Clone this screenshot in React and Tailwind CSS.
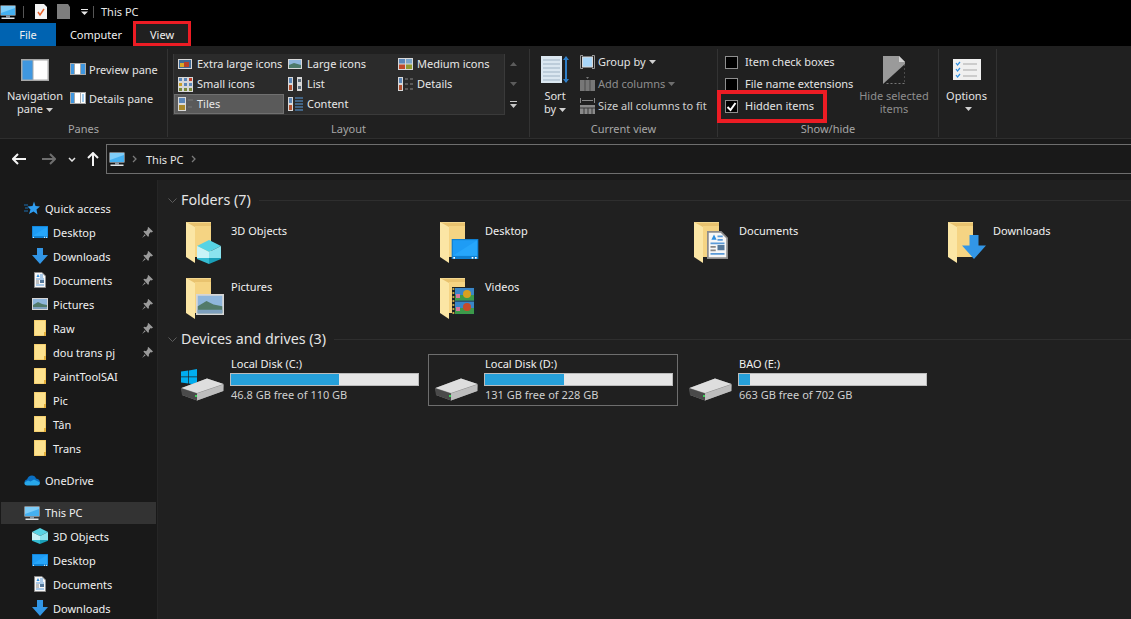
import React from 'react';

// little drawn icons, all pixel sized like the Win10 shell ones
const Monitor = ({ className = 'w-4 h-4' }) => (
  <svg viewBox="0 0 16 16" className={className}>
    <rect x="0.5" y="1.5" width="15" height="10" fill="#d5dfe8" />
    <rect x="1" y="2" width="14" height="9" fill="#45b0f0" />
    <path d="M1 2h14v2L1 9z" fill="#7fcdf8" />
    <rect x="6" y="11.5" width="4" height="2" fill="#8a9aa8" />
    <rect x="1.5" y="13.5" width="13" height="1.5" fill="#e0e6ea" />
  </svg>
);
const BlueDesktop = ({ className = 'w-4 h-4' }) => (
  <svg viewBox="0 0 16 12" className={className}>
    <rect width="16" height="12" fill="#0f7fd0" />
    <rect x="0.7" y="0.7" width="14.6" height="9.4" fill="#1e9cf5" />
    <path d="M0.7 10.1 15.3 0.7V10.1z" fill="#26a6fb" />
    <rect x="12" y="10.8" width="1" height="1" fill="#fff" />
    <rect x="14" y="10.8" width="1" height="1" fill="#fff" />
    <rect x="1" y="10.8" width="1" height="1" fill="#fff" />
  </svg>
);
const DownArrow = ({ className = 'w-4 h-4' }) => (
  <svg viewBox="0 0 16 16" className={className}>
    <path d="M5 0h6v7h5l-8 9-8-9h5z" fill="#3296e6" />
  </svg>
);
const DocIcon = ({ className = 'w-4 h-4' }) => (
  <svg viewBox="0 0 12 16" className={className}>
    <path d="M0.5 0.5H8L11.5 4v11.5H0.5z" fill="#f7f7f7" stroke="#8c8c8c" />
    <path d="M2.5 5 4 2l1.5 3z" fill="#2f8fe0" />
    <path d="M6 3h3M6 5h3M2 7h8M2 13h8" stroke="#5a9ad8" />
    <rect x="6" y="8" width="4" height="3" fill="#55789a" />
    <path d="M2 9h3M2 11h3" stroke="#888" />
  </svg>
);
const PicIcon = ({ className = 'w-4 h-4' }) => (
  <svg viewBox="0 0 16 12" className={className}>
    <rect width="16" height="12" fill="#d6d6d6" />
    <rect x="1" y="1" width="14" height="10" fill="#8fb6dc" />
    <path d="M1 7 6 4l4 2 5 1v4H1z" fill="#527a6a" />
    <rect x="1" y="9" width="14" height="2" fill="#7d9fbd" />
  </svg>
);
const SmallFolder = () => (
  <svg viewBox="0 0 12 16" className="w-3 h-4">
    <rect width="12" height="16" fill="#f0c55e" />
    <rect x="0.6" y="0.6" width="10.6" height="14.8" fill="#fde28e" />
    <path d="M10 16v-4h2v4z" fill="#e3ae3a" />
  </svg>
);
const Cube = ({ className = 'w-4 h-4' }) => (
  <svg viewBox="0 0 24 24" className={className}>
    <path d="M12 0 24 6 12 12 0 6z" fill="#57d3e4" />
    <path d="M0 6 12 12V18L0 18z" fill="#c9f3f7" />
    <path d="M24 6 12 12V18H24z" fill="#8be3ee" />
    <path d="M0 18H12V24L0 19z" fill="#35bcd2" />
    <path d="M24 18H12V24L24 19z" fill="#1a9fb8" />
  </svg>
);
const Pin = () => (
  <svg viewBox="0 0 12 12" className="w-[11px] h-[11px]">
    <path d="M7 0 12 5 10.5 6 9.5 5.5 7.5 8 7.5 10 6.5 10.5 1.5 5 2.5 4 4.5 4.5 6.5 2 6 1z M3 8 0 12 4 9z" fill="#9a9a9a" />
  </svg>
);
const Star = () => (
  <svg viewBox="0 0 16 16" className="w-4 h-4">
    <path d="M10 1.5 11.5 6 16 6.5 12.5 9.5 13.5 14.5 9.5 11.5 5 14 6.5 9.5 3.5 6.5 8.5 6z" fill="#2f9df0" />
    <path d="M0 5h4M1 8h3M0 11h4" stroke="#1d6fb0" />
  </svg>
);
const Cloud = () => (
  <svg viewBox="0 0 16 11" className="w-4 h-[11px]">
    <path d="M3 4.5C4 2 5.500 0.500 8 0.500c2 0 3.500 1.200 4 3C14.500 3.800 16 5.500 16 7.500H0.500C0.500 6 1.500 4.700 3 4.500z" fill="#0a6fc2" />
    <path d="M0.500 7.500C0 9.500 1.500 10.500 3 10.500h10.500c1.500 0 2.500-1.300 2.500-3L10 4.500 6.500 6.500 4 5.500z" fill="#28a8ea" />
  </svg>
);
const Caret = ({ color = '#d0d0d0' }) => (
  <svg viewBox="0 0 7 4" className="inline-block w-[7px] h-1 ml-[3px] align-middle">
    <path d="M0 0h7L3.500 4z" fill={color} />
  </svg>
);

// 3 x 3 pane-layout thumbnails for the ribbon
const PaneIcon = ({ side }) => (
  <svg viewBox="0 0 16 12" className="w-4 h-3">
    <rect width="16" height="12" fill="#a8a8a8" />
    <rect x="1" y="1" width="3" height="10" fill="#3f97e0" />
    <rect x="5" y="1" width="5" height="10" fill="#fff" />
    <rect x="11" y="1" width="4" height="10" fill={side} />
    {side === '#fff' && <path d="M12 3h2M12 5h2M12 7h2M12 9h2" stroke="#3f97e0" />}
  </svg>
);
const GalleryIcon = ({ kind }) => {
  if (kind === 'xl') {
    return (
      <svg viewBox="0 0 14 10" className="w-[14px] h-[10px]">
        <rect width="14" height="10" fill="#d8d8d8" />
        <rect x="1" y="1" width="12" height="8" fill="#3f6a96" />
        <rect x="2" y="4" width="4" height="4" fill="#d8a82a" />
        <rect x="6" y="3" width="5" height="5" fill="#b8402a" />
      </svg>
    );
  }
  if (kind === 'lg') {
    return (
      <svg viewBox="0 0 14 10" className="w-[14px] h-[10px]">
        <rect width="14" height="10" fill="#d8d8d8" />
        <rect x="1" y="1" width="12" height="8" fill="#8fb6dc" />
        <path d="M1 6 6 4l7 2v3H1z" fill="#4d7a6a" />
      </svg>
    );
  }
  if (kind === 'md') {
    return (
      <svg viewBox="0 0 15 12" className="w-[15px] h-3">
        <rect width="15" height="12" fill="#d8d8d8" />
        <rect x="1" y="1" width="6" height="4.500" fill="#5b86b8" />
        <rect x="8" y="1" width="6" height="4.500" fill="#7aa4c8" />
        <rect x="1" y="6.500" width="6" height="4.500" fill="#c04a2a" />
        <rect x="8" y="6.500" width="6" height="4.500" fill="#8f9a30" />
      </svg>
    );
  }
  if (kind === 'sm') {
    return (
      <svg viewBox="0 0 15 15" className="w-[15px] h-[15px]">
        <rect width="15" height="15" fill="#d8d8d8" />
        {[1, 6, 11].map((y) =>
          [1, 6, 11].map((x) => (
            <rect key={`${x}-${y}`} x={x} y={y} width="3" height="3" fill={x === 11 && y === 1 ? '#c0402a' : x === 1 && y === 6 ? '#c9a02a' : y === 11 ? '#7a8a3a' : '#5b86b8'} />
          ))
        )}
      </svg>
    );
  }
  if (kind === 'tile' || kind === 'content' || kind === 'list' || kind === 'det') {
    return (
      <svg viewBox="0 0 15 14" className="w-[15px] h-[14px]">
        <rect x="0" y="0" width={kind === 'tile' ? 8 : 5} height="14" fill="#d8d8d8" />
        <rect x="1" y="1" width={kind === 'tile' ? 6 : 3} height="5" fill="#5b86b8" />
        <rect x="1" y="8" width={kind === 'tile' ? 6 : 3} height="5" fill={kind === 'tile' ? '#a9882a' : '#b05030'} />
        {kind === 'list' && <rect x="9" y="0" width="5" height="14" fill="#d8d8d8" />}
        {kind === 'list' && <rect x="10" y="2" width="3" height="3" fill="#5b6a78" />}
        {kind === 'list' && <rect x="10" y="9" width="3" height="3" fill="#5b6a78" />}
        {kind === 'content' && <path d="M7 1h8M7 4h8M7 7h8M7 10h8M7 13h8" stroke="#5b9ee0" />}
        {kind === 'det' && <path d="M7 2h3M12 2h3M7 7h3M12 7h3M7 12h3M12 12h3" stroke="#8a8a8a" />}
        {kind === 'tile' && <path d="M10 3h5M10 10h4" stroke="#777" />}
      </svg>
    );
  }
  return null;
};

// shell folder with an overlay drawn on its front
const Folder = ({ children }) => (
  <div className="relative w-[45px] h-[44px] shrink-0">
    <svg viewBox="0 0 26 41" className="absolute left-0 top-0 w-[26px] h-[41px]">
      <rect x="0" y="0" width="25" height="35" fill="#e9c36f" />
      <path d="M9 4H25V35H9z" fill="#f5d483" />
      <path d="M0 0 9 5V41L0 35z" fill="#fbe6a5" />
      <path d="M0 0H25V1H3z" fill="#f3d78f" />
    </svg>
    {children}
  </div>
);

const FilmStrip = () => (
  <svg viewBox="0 0 25 28" className="absolute left-[12px] top-[9px] w-[25px] h-[28px]">
    <rect width="25" height="28" fill="#1c2226" />
    <rect x="3" y="1" width="19" height="12.500" fill="#3a86c8" />
    <rect x="3" y="14.500" width="19" height="12.500" fill="#3a86c8" />
    <rect x="3" y="8" width="19" height="5.500" fill="#3c9a4a" />
    <rect x="3" y="21" width="19" height="6" fill="#3c9a4a" />
    <circle cx="15" cy="7" r="4" fill="#d8a020" />
    <circle cx="15" cy="20" r="4" fill="#c84a2a" />
    <rect x="4" y="7" width="4" height="4" fill="#d878a0" />
    <rect x="4" y="20" width="4" height="4" fill="#d878a0" />
    {[2, 6, 10, 14, 18, 22, 26].map((y) => (
      <rect key={y} x="0.500" y={y - 1} width="1.800" height="2" fill="#c8a848" />
    ))}
  </svg>
);

const HardDisk = ({ win }) => (
  <div className="relative w-[44px] h-[32px] shrink-0">
    {win && (
      <svg viewBox="0 0 16 16" className="absolute left-0 top-0 w-4 h-4">
        <path d="M0 2.500 7.300 1.500V7.500H0zM8 1.400 16 0V7.500H8zM0 8.300H7.300V14.500L0 13.500zM8 8.300H16V16L8 14.600z" fill="#00adef" />
      </svg>
    )}
    <svg viewBox="0 0 44 23" className="absolute left-0 bottom-0 w-[44px] h-[23px]">
      <path d="M0.500 10 26 0.500 42.500 6 42 13 16 22.500 1 17z" fill="#8c8c8c" />
      <path d="M0.500 10 26 0.500 42.500 6 16 15z" fill="#dedede" />
      <path d="M1 10.500 16 15.500V22.500L1 17z" fill="#4a4a4a" />
      <path d="M16 15.500 42.500 6.500V13L16 22.500z" fill="#bdbdbd" />
      <rect x="14" y="17" width="2" height="2" fill="#3cd05a" />
    </svg>
  </div>
);

const quickAccess = [
  { name: 'Desktop', icon: <BlueDesktop className="w-4 h-3" />, pin: true },
  { name: 'Downloads', icon: <DownArrow />, pin: true },
  { name: 'Documents', icon: <DocIcon className="w-3 h-4" />, pin: true },
  { name: 'Pictures', icon: <PicIcon className="w-4 h-3" />, pin: true },
  { name: 'Raw', icon: <SmallFolder />, pin: true },
  { name: 'dou trans pj', icon: <SmallFolder />, pin: true },
  { name: 'PaintToolSAI', icon: <SmallFolder /> },
  { name: 'Pic', icon: <SmallFolder /> },
  { name: 'Tân', icon: <SmallFolder /> },
  { name: 'Trans', icon: <SmallFolder /> },
];
const thisPc = [
  { name: '3D Objects', icon: <Cube /> },
  { name: 'Desktop', icon: <BlueDesktop className="w-4 h-3" /> },
  { name: 'Documents', icon: <DocIcon className="w-3 h-4" /> },
  { name: 'Downloads', icon: <DownArrow /> },
];

const folders = [
  { name: '3D Objects', overlay: <Cube className="absolute left-[11px] top-[18px] w-6 h-6" /> },
  { name: 'Desktop', overlay: <BlueDesktop className="absolute left-[11px] top-[17px] w-7 h-5" /> },
  { name: 'Documents', overlay: <DocIcon className="absolute left-[13px] top-[9px] w-[21px] h-7" /> },
  { name: 'Downloads', overlay: <DownArrow className="absolute left-[14px] top-[13px] w-6 h-6" /> },
  { name: 'Pictures', overlay: <PicIcon className="absolute left-[10px] top-[16px] w-7 h-[21px]" /> },
  { name: 'Videos', overlay: <FilmStrip /> },
];

const drives = [
  { name: 'Local Disk (C:)', free: '46.8 GB free of 110 GB', used: 58, win: true },
  { name: 'Local Disk (D:)', free: '131 GB free of 228 GB', used: 42, selected: true },
  { name: 'BAO (E:)', free: '663 GB free of 702 GB', used: 6 },
];

const gallery = [
  { kind: 'xl', label: 'Extra large icons' },
  { kind: 'lg', label: 'Large icons' },
  { kind: 'md', label: 'Medium icons' },
  { kind: 'sm', label: 'Small icons' },
  { kind: 'list', label: 'List' },
  { kind: 'det', label: 'Details' },
  { kind: 'tile', label: 'Tiles', active: true },
  { kind: 'content', label: 'Content' },
];

const RibbonGroup = ({ width, label, children }) => (
  <div className={`${width} mt-[3px] h-[88px] shrink-0 flex flex-col border-r border-[#333333]`}>
    <div className="h-[72px] flex relative">{children}</div>
    <div className="h-4 text-center leading-4 text-[#a6a6a6]">{label}</div>
  </div>
);

const NavRow = ({ item }) => (
  <div className="h-6 flex items-center pl-8">
    <span className="w-4 flex justify-center shrink-0">{item.icon}</span>
    <span className="ml-[5px] text-[#f0f0f0]">{item.name}</span>
    {item.pin && <span className="ml-auto mr-[4px]"><Pin /></span>}
  </div>
);

const SectionHeader = ({ title }) => (
  <div className="h-5 flex items-center pl-[10px]">
    <svg viewBox="0 0 9 5" className="w-[9px] h-[5px] shrink-0">
      <path d="M0.500 0.500 4.500 4.500 8.500 0.500" fill="none" stroke="#5c5c5c" />
    </svg>
    <span className="ml-[4px] text-[14.300px] leading-5 text-[#e4e4e4]">{title}</span>
    <div className="flex-1 h-px ml-2 bg-[#2e2e2e]" />
  </div>
);

const CheckRow = ({ label, checked }) => (
  <div className="h-[22px] flex items-center">
    <span className="w-[13px] h-[13px] border border-[#8f8f8f] bg-black flex items-center justify-center">
      {checked && (
        <svg viewBox="0 0 11 11" className="w-[11px] h-[11px]">
          <path d="M1.500 6 4.500 9 9.500 2" fill="none" stroke="#fff" strokeWidth="2" />
        </svg>
      )}
    </span>
    <span className="ml-[7px] mb-[2px] whitespace-nowrap text-[#e4e4e4]">{label}</span>
  </div>
);

export default function App() {
  return (
    <div className="relative w-[1131px] h-[619px] overflow-hidden bg-[#202020] text-white text-[11px] leading-[13px] font-['Noto_Sans','Open_Sans',sans-serif]">
      {/* Title bar */}
      <div className="h-[23px] bg-black flex items-center">
        <Monitor className="w-4 h-4" />
        <div className="ml-[7px] w-px h-3 bg-[#555]" />
        <svg viewBox="0 0 12 15" className="ml-[11px] w-3 h-[15px]">
          <path d="M0 0H9L12 3V15H0z" fill="#f2f2f2" />
          <path d="M3 8 5 11 9 5" fill="none" stroke="#e8632c" strokeWidth="1.500" />
        </svg>
        <svg viewBox="0 0 13 15" className="ml-[10px] w-[13px] h-[15px]">
          <path d="M0 0H11L13 3V15H0z" fill="#7d7d7d" />
        </svg>
        <svg viewBox="0 0 7 6" className="ml-[11px] w-[7px] h-[6px]">
          <path d="M0 0H7V1H0zM0 2.500H7L3.500 6z" fill="#e8e8e8" />
        </svg>
        <div className="ml-[5px] w-px h-3 bg-[#555]" />
        <span className="ml-[7px] text-[#e8e8e8]">This PC</span>
      </div>

      {/* Tabs */}
      <div className="h-[23px] bg-black flex items-stretch text-[#f0f0f0]">
        <div className="w-[56px] bg-[#0063b1] flex items-center justify-center">File</div>
        <div className="w-[80px] flex items-center justify-center">Computer</div>
        <div className="w-[52px] bg-[#202020] flex items-center justify-center">View</div>
      </div>

      {/* Ribbon */}
      <div className="h-[93px] bg-[#202020] border-b border-[#2e2e2e] flex items-start">
        <RibbonGroup width="w-[168px]" label="Panes">
          <div className="w-[70px] pt-[10px] flex flex-col items-center text-center text-[#e4e4e4]">
            <svg viewBox="0 0 28 22" className="w-7 h-[22px]">
              <rect width="28" height="22" fill="#a8a8a8" />
              <rect x="1.500" y="1.500" width="10" height="19" fill="#3f97e0" />
              <rect x="12.500" y="1.500" width="14" height="19" fill="#fff" />
            </svg>
            <div className="mt-2">Navigation</div>
            <div>pane<Caret /></div>
          </div>
          <div className="pt-[10px] flex flex-col gap-[9px] text-[#e4e4e4]">
            <div className="h-5 flex items-center gap-[3px]"><PaneIcon side="#3f97e0" />Preview pane</div>
            <div className="h-5 flex items-center gap-[3px]"><PaneIcon side="#fff" />Details pane</div>
          </div>
        </RibbonGroup>

        <RibbonGroup width="w-[362px]" label="Layout">
          <div className="ml-[5px] mt-[5px] w-[332px] h-[61px] border border-t-0 border-[#3a3a3a] bg-[#2b2b2b] grid grid-cols-[110px_110px_110px] auto-rows-[20px] text-[#e8e8e8]">
            {gallery.map((g) => (
              <div key={g.label} className={`flex items-center ${g.active ? 'bg-[#5a5a5a] border border-[#707070] pl-[2px]' : 'pl-[3px]'}`}>
                <span className="w-4 flex justify-center shrink-0"><GalleryIcon kind={g.kind} /></span>
                <span className="ml-[4px] mb-[2px] whitespace-nowrap">{g.label}</span>
              </div>
            ))}
          </div>
          <div className="ml-px mt-[5px] w-[14px] h-[61px] flex flex-col items-center">
            <div className="h-5 flex items-center">
              <svg viewBox="0 0 7 4" className="w-[7px] h-1"><path d="M0 4h7L3.500 0z" fill="#5c5c5c" /></svg>
            </div>
            <div className="h-5 flex items-center">
              <svg viewBox="0 0 7 4" className="w-[7px] h-1"><path d="M0 0h7L3.500 4z" fill="#5c5c5c" /></svg>
            </div>
            <div className="h-5 flex items-center">
              <svg viewBox="0 0 7 7" className="w-[7px] h-[7px]"><path d="M0 0H7V1H0zM0 3H7L3.500 7z" fill="#c8c8c8" /></svg>
            </div>
          </div>
        </RibbonGroup>

        <RibbonGroup width="w-[188px]" label="Current view">
          <div className="w-[50px] pt-[7px] flex flex-col items-center text-center text-[#e4e4e4]">
            <svg viewBox="0 0 28 27" className="w-7 h-[27px]">
              <rect width="21" height="27" fill="#dbe7f0" />
              <path d="M2 4h17M2 8h17M2 12h17M2 16h17M2 20h17M2 24h17" stroke="#9fb3c4" />
              <path d="M25 1v25" stroke="#2f7fc8" strokeWidth="2" />
              <path d="M22 4l3-4 3 4zM22 23l3 4 3-4z" fill="#2f7fc8" />
            </svg>
            <div className="mt-[6px]">Sort</div>
            <div>by<Caret /></div>
          </div>
          <div className="pt-[2px]">
            <div className="h-[22px] flex items-center text-[#e4e4e4]">
              <svg viewBox="0 0 15 14" className="w-[15px] h-[14px]">
                <path d="M3 0.500H0.500V13.500H3M12 0.500H14.500V13.500H12" fill="none" stroke="#9a9a9a" />
                <rect x="2.500" y="2" width="10" height="10" fill="#a8d6f8" stroke="#d8d8d8" />
              </svg>
              <span className="ml-[3px] mb-[2px]">Group by</span><Caret />
            </div>
            <div className="h-[22px] flex items-center text-[#8e8e8e]">
              <svg viewBox="0 0 15 14" className="w-[15px] h-[14px]">
                <path d="M6 0h3L7.500 2z" fill="#777" />
                <rect x="0" y="3" width="15" height="11" fill="#777" />
                <path d="M5 3v11M10 3v11" stroke="#4a4a4a" />
              </svg>
              <span className="ml-[3px] mb-[2px]">Add columns</span><Caret color="#6e6e6e" />
            </div>
            <div className="h-[22px] flex items-center text-[#cfcfcf]">
              <svg viewBox="0 0 15 16" className="w-[15px] h-4">
                <path d="M0.500 0v5M14.500 0v5M2 2.500h11" stroke="#888" />
                <rect x="0" y="7" width="15" height="9" fill="#8a8a8a" />
                <path d="M0 10h15M4 10v6M8 10v6M12 10v6" stroke="#3a3a3a" />
              </svg>
              <span className="ml-[3px] mb-[2px] whitespace-nowrap">Size all columns to fit</span>
            </div>
          </div>
        </RibbonGroup>

        <RibbonGroup width="w-[221px]" label="Show/hide">
          <div className="pl-[7px] pt-[2px]">
            <CheckRow label="Item check boxes" />
            <CheckRow label="File name extensions" />
            <CheckRow label="Hidden items" checked />
          </div>
          <div className="ml-auto mr-[8px] w-[72px] pt-[7px] flex flex-col items-center text-center text-[#8e8e8e]">
            <svg viewBox="0 0 22 28" className="w-[22px] h-7">
              <path d="M0 0H16L22 6V8L0 28z" fill="#9a9a9a" />
              <path d="M22 8V27.500H3" fill="none" stroke="#777" strokeDasharray="2 2" />
              <path d="M16 0 22 6H16z" fill="#d4d4d4" />
            </svg>
            <div className="mt-[5px] whitespace-nowrap">Hide selected</div>
            <div>items</div>
          </div>
        </RibbonGroup>

        <RibbonGroup width="w-[58px]" label="">
          <div className="w-[55px] pt-[10px] flex flex-col items-center text-[#e4e4e4]">
            <svg viewBox="0 0 28 21" className="w-7 h-[21px]">
              <rect width="28" height="21" fill="#f0f0f0" />
              <path d="M3 4l1.500 2L7 3M3 10l1.500 2L7 9M3 16l1.500 2L7 15" fill="none" stroke="#2f8fe0" strokeWidth="1.200" />
              <path d="M10 5h14M10 11h14M10 17h14" stroke="#a8a8a8" />
            </svg>
            <div className="mt-[9px]">Options</div>
            <div className="h-[13px] flex items-center"><Caret /></div>
          </div>
        </RibbonGroup>
      </div>

      {/* Address row */}
      <div className="h-[41px] bg-[#191919] flex items-start">
        <div className="w-[106px] h-[40px] flex items-center shrink-0">
          <svg viewBox="0 0 14 12" className="ml-[12px] w-[14px] h-3">
            <path d="M6 1 1 6l5 5M1 6h13" fill="none" stroke="#f4f4f4" strokeWidth="2" />
          </svg>
          <svg viewBox="0 0 14 12" className="ml-[16px] w-[14px] h-3">
            <path d="M8 1l5 5-5 5M13 6H0" fill="none" stroke="#6e6e6e" strokeWidth="2" />
          </svg>
          <svg viewBox="0 0 8 5" className="ml-[12px] w-2 h-[5px]">
            <path d="M1 1l3 3 3-3" fill="none" stroke="#e4e4e4" strokeWidth="1.500" />
          </svg>
          <svg viewBox="0 0 12 14" className="ml-[11px] w-3 h-[14px]">
            <path d="M1 6l5-5 5 5M6 1v13" fill="none" stroke="#f4f4f4" strokeWidth="2" />
          </svg>
        </div>
        <div className="mt-[5px] flex-1 h-[30px] border-y border-l border-[#6e6e6e] flex items-center pl-[2px] text-[#e4e4e4]">
          <Monitor className="w-4 h-4" />
          <svg viewBox="0 0 5 8" className="ml-[7px] w-[5px] h-2"><path d="M1 1l3 3-3 3" fill="none" stroke="#7a7a7a" strokeWidth="1.300" /></svg>
          <span className="ml-[9px]">This PC</span>
          <svg viewBox="0 0 5 8" className="ml-[7px] w-[5px] h-2"><path d="M1 1l3 3-3 3" fill="none" stroke="#7a7a7a" strokeWidth="1.300" /></svg>
        </div>
      </div>

      <div className="flex h-[439px]">
        {/* Navigation pane */}
        <div className="w-[157px] shrink-0 bg-[#191919] pt-4 overflow-hidden">
          <div className="h-6 flex items-center pl-6 text-[#f0f0f0]">
            <Star /><span className="ml-[5px]">Quick access</span>
          </div>
          {quickAccess.map((item) => <NavRow key={item.name} item={item} />)}
          <div className="mt-2 h-6 flex items-center pl-6 text-[#f0f0f0]">
            <Cloud /><span className="ml-[5px]">OneDrive</span>
          </div>
          <div className="mt-[10px] mx-px h-[22px] bg-[#333333] flex items-center pl-[23px] text-[#f0f0f0]">
            <Monitor /><span className="ml-[5px] mb-[2px]">This PC</span>
          </div>
          {thisPc.map((item) => <NavRow key={item.name} item={item} />)}
        </div>

        {/* Content */}
        <div className="flex-1 pt-[10px] border-l border-[#262626]">
          <SectionHeader title="Folders (7)" />
          <div className="mt-3 pl-[28px] h-[107px] grid grid-cols-[254px_254px_254px_254px] auto-rows-[56px] content-start">
            {folders.map((f) => (
              <div key={f.name} className="flex items-start">
                <Folder>{f.overlay}</Folder>
                <span className="mt-[2px] text-[#f0f0f0]">{f.name}</span>
              </div>
            ))}
          </div>
          <SectionHeader title="Devices and drives (3)" />
          <div className="mt-[5px] pl-[16px] flex gap-[4px]">
            {drives.map((d) => (
              <div key={d.name} className={`w-[250px] h-[52px] border flex items-end pb-[4px] pl-[6px] ${d.selected ? 'border-[#6e6e6e]' : 'border-transparent'}`}>
                <HardDisk win={d.win} />
                <div className="ml-[5px] w-[189px] self-start">
                  <div className="h-[18px] pl-px leading-[18px] text-[#f0f0f0]">{d.name}</div>
                  <div className="h-[13px] bg-[#e6e6e6] border border-[#bcbcbc]">
                    <div className="h-full bg-[#26a0da]" style={{ width: `${d.used}%` }} />
                  </div>
                  <div className="h-[18px] pl-px leading-[18px] text-[#cfcfcf] whitespace-nowrap">{d.free}</div>
                </div>
              </div>
            ))}
          </div>
        </div>
      </div>

      {/* Red annotation boxes drawn over the screenshot */}
      <div className="absolute left-[133px] top-[21px] w-[58px] h-[25px] border-[3px] border-[#ed1c24]" />
      <div className="absolute left-[717px] top-[90px] w-[110px] h-[33px] border-[4px] border-[#ed1c24]" />
    </div>
  );
}
